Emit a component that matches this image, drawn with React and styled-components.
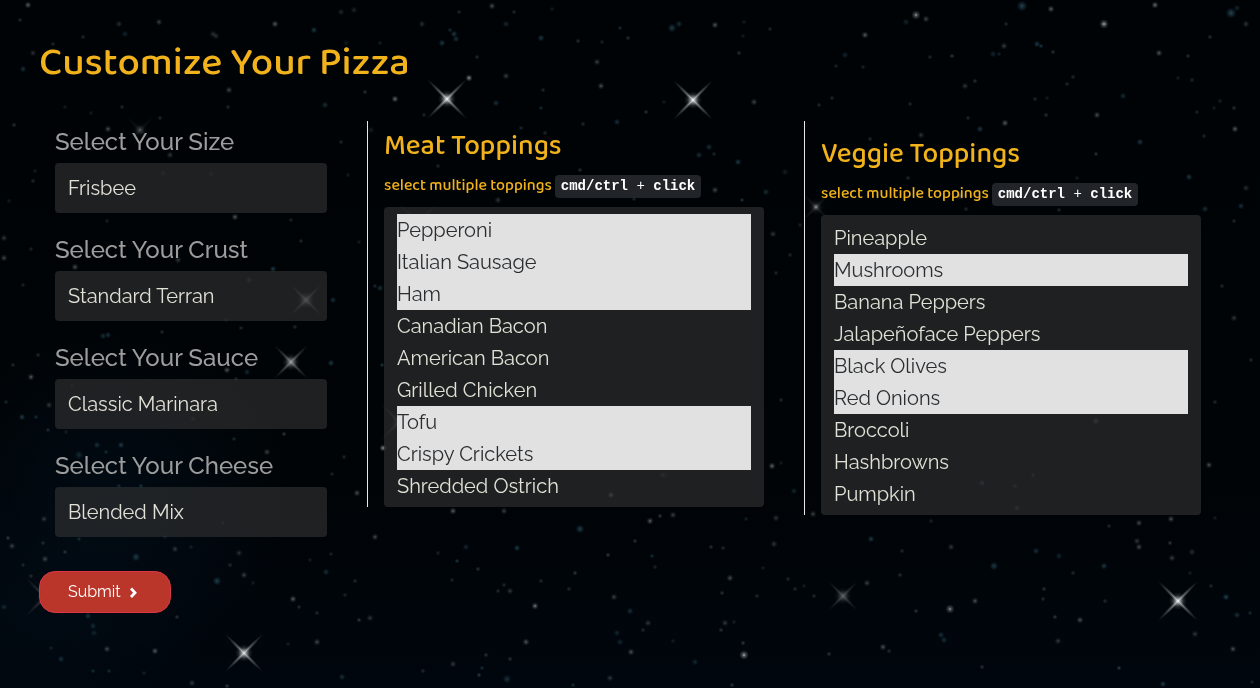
import React from "react";
import styled, { createGlobalStyle, css } from "styled-components";

const textFont = `Raleway, Lato, "Open Sans", sans-serif`;
const headingFont = `"Baloo 2", Lato, "Noto Sans", sans-serif`;

const GlobalStyle = createGlobalStyle`
  *, *::before, *::after { box-sizing: border-box; }
  body {
    margin: 0;
    background: #000408;
    color: #e1e1d8;
    font-family: ${textFont};
    font-size: 16px;
  }
`;

const Sky = styled.svg`
  position: fixed;
  inset: 0;
  width: 100%;
  height: 100%;
  z-index: -1;
`;

const Page = styled.main`
  padding: 39px 43px 40px 39px;
`;

const Title = styled.h1`
  margin: 0 0 34px;
  font: 500 40px/48px ${headingFont};
  color: #f1b21b;
`;

const Columns = styled.div`
  display: grid;
  grid-template-columns: 304px minmax(0, 1fr) minmax(0, 1fr);
  gap: 24px;
  align-items: start;
`;

const BaseColumn = styled.div`
  display: grid;
  gap: 20px;
  padding: 4px 16px 0;
`;

const Field = styled.div`
  display: grid;
  gap: 4px;
`;

const FieldLabel = styled.label`
  font-size: 24px;
  font-weight: 500;
  line-height: 34px;
  color: #9c9c9c;
`;

const control = css`
  display: block;
  width: 100%;
  margin: 0;
  border: 0;
  border-radius: 4px;
  outline: 0;
  appearance: none;
  background: rgba(54, 54, 54, 0.58);
  color: #e1e1d8;
  font: 400 20px/24px ${textFont};
`;

const Dropdown = styled.select`
  ${control}
  height: 50px;
  padding: 0 13px;
`;

const ToppingColumn = styled.section`
  padding: ${(p) => (p.$lowered ? 17 : 9)}px 16px 0;
  border-left: 1px solid #e8e8e8;
`;

const ToppingTitle = styled.h2`
  margin: 0 0 8px;
  font: 500 28px/34px ${headingFont};
  color: #f1b21b;
`;

const Hint = styled.label`
  display: flex;
  align-items: baseline;
  gap: 3px;
  margin-bottom: 8px;
  font: 500 16px/27px ${headingFont};
  color: #f1b21b;
`;

const Keys = styled.code`
  padding: 3px 6px;
  border-radius: 4px;
  background: #212529;
  color: #fff;
  font: 400 14px/17px "Liberation Mono", monospace;
  white-space: pre;
`;

const Toppings = styled.select`
  ${control}
  height: 300px;
  padding: 7px 13px 5px;
  overflow: hidden;

  option {
    min-height: 32px;
    padding: 4px 0;
    line-height: 24px;
  }

  option:checked {
    background: #e1e1e1 linear-gradient(#e1e1e1, #e1e1e1);
    color: #2b2e31;
  }
`;

const SubmitButton = styled.button`
  display: flex;
  align-items: center;
  gap: 8px;
  height: 42px;
  margin-top: 34px;
  padding: 0 32px 0 28px;
  border: 1px solid #dc3545;
  border-radius: 16px;
  background: #bb362a;
  color: #fff;
  font: 400 16px/24px ${textFont};
  cursor: pointer;
`;

/* Sky map: [x, y, radius, brightness] */
const whiteStars = [
  [28, 5, 2, 0.6], [159, 22, 2, 0.4], [275, 24, 2, 0.6], [119, 24, 2, 0.3], [213, 34, 2, 0.3], [216, 36, 2, 0.3],
  [33, 53, 2, 0.3], [229, 90, 2, 0.45], [395, 99, 2, 0.7], [108, 129, 2, 0.5], [140, 130, 3, 0.4], [170, 155, 2, 0.35],
  [341, 12, 2, 0.25], [354, 10, 2, 0.25], [235, 217, 2, 0.55], [53, 44, 1, 0.3], [83, 37, 1, 0.3],
  [122, 107, 1, 0.3], [14, 125, 1, 0.35], [65, 107, 1, 0.2], [91, 113, 1, 0.2], [160, 118, 1, 0.3], [228, 107, 1, 0.3],
  [365, 92, 1, 0.35], [341, 142, 1, 0.3], [371, 130, 2, 0.2], [33, 181, 1, 0.3], [163, 173, 2, 0.15], [211, 174, 2, 0.15],
  [291, 220, 1, 0.25], [107, 221, 1, 0.25], [9, 201, 1, 0.2], [35, 171, 1, 0.2], [348, 175, 1, 0.2], [20, 20, 1, 0.3],
  [4, 238, 2, 0.35], [4, 258, 2, 0.45], [75, 267, 2, 0.5], [31, 249, 1, 0.25], [23, 285, 1, 0.25], [178, 260, 2, 0.35],
  [249, 280, 2, 0.25], [226, 320, 1, 0.2], [162, 332, 1, 0.3], [31, 377, 2, 0.55], [227, 370, 2, 0.55], [236, 379, 1, 0.3],
  [49, 405, 2, 0.35], [38, 355, 1, 0.3], [13, 365, 1, 0.3], [193, 419, 2, 0.2], [284, 434, 1, 0.4], [48, 430, 1, 0.3],
  [66, 432, 1, 0.2], [267, 452, 2, 0.4], [383, 448, 2, 0.9], [344, 457, 1, 0.3], [241, 328, 1, 0.3], [295, 327, 1, 0.3],
  [72, 386, 1, 0.2], [301, 241, 1, 0.3], [359, 242, 1, 0.2], [357, 493, 2, 0.5], [375, 537, 2, 0.45], [332, 474, 1, 0.25],
  [12, 546, 2, 0.4], [8, 538, 1, 0.4], [44, 519, 2, 0.35], [45, 559, 2, 0.45], [43, 543, 1, 0.3], [65, 552, 1, 0.35],
  [175, 549, 2, 0.35], [239, 553, 2, 0.3], [191, 547, 1, 0.2], [244, 575, 2, 0.4], [230, 565, 1, 0.3], [253, 583, 1, 0.2],
  [293, 599, 2, 0.6], [299, 607, 1, 0.3], [317, 613, 1, 0.3], [331, 554, 1, 0.25], [310, 560, 1, 0.2], [355, 581, 1, 0.3],
  [345, 595, 1, 0.25], [359, 620, 1, 0.4], [370, 618, 2, 0.35], [317, 642, 2, 0.45], [288, 644, 1, 0.2], [155, 651, 2, 0.55],
  [107, 649, 2, 0.45], [177, 617, 1, 0.35], [31, 576, 1, 0.3], [51, 648, 1, 0.2], [192, 683, 2, 0.35], [227, 686, 1, 0.4],
  [492, 6, 2, 0.5], [422, 24, 2, 0.3], [469, 78, 2, 0.9], [506, 76, 2, 0.4], [601, 86, 2, 0.5], [597, 62, 2, 0.4],
  [715, 25, 2, 0.55], [754, 102, 2, 0.45], [739, 53, 1, 0.35], [578, 41, 1, 0.35], [628, 38, 1, 0.35], [477, 57, 1, 0.3],
  [602, 42, 1, 0.25], [770, 29, 1, 0.3], [744, 22, 1, 0.2], [514, 12, 1, 0.3], [552, 9, 1, 0.2], [459, 12, 1, 0.3],
  [583, 124, 1, 0.3], [646, 112, 1, 0.35], [664, 102, 1, 0.2], [543, 90, 1, 0.3], [545, 133, 1, 0.3], [424, 115, 1, 0.3],
  [715, 190, 2, 0.45], [580, 170, 1, 0.35], [498, 200, 2, 0.35], [438, 166, 1, 0.3], [785, 172, 2, 0.2], [816, 207, 2, 0.8],
  [832, 98, 1, 0.3], [819, 105, 1, 0.3], [836, 66, 1, 0.25], [743, 36, 1, 0.2], [800, 225, 1, 0.25],
  [916, 15, 3, 0.85], [926, 19, 2, 0.45], [865, 35, 2, 0.6], [1004, 46, 2, 0.4], [1051, 9, 2, 0.6], [1104, 24, 3, 1],
  [1155, 5, 2, 0.7], [1246, 24, 2, 0.35], [1159, 53, 2, 0.55], [1188, 56, 1, 0.35], [952, 56, 1, 0.4], [930, 57, 1, 0.3],
  [1053, 52, 1, 0.35], [965, 86, 2, 0.35], [975, 81, 1, 0.35], [1005, 123, 2, 0.6], [1097, 115, 2, 0.5], [1235, 129, 2, 0.6],
  [1035, 99, 1, 0.3], [1047, 98, 1, 0.2], [1046, 115, 1, 0.35], [1067, 84, 1, 0.3], [1073, 77, 1, 0.3], [910, 104, 1, 0.3],
  [968, 118, 1, 0.3], [921, 135, 2, 0.35], [870, 139, 1, 0.3], [863, 67, 1, 0.25], [1192, 80, 1, 0.3], [1178, 78, 1, 0.2],
  [1220, 101, 1, 0.25], [1234, 108, 1, 0.35], [1197, 112, 1, 0.25], [1214, 108, 1, 0.2], [1096, 154, 1, 0.35], [1246, 188, 2, 0.3],
  [1234, 221, 1, 0.3], [1059, 210, 1, 0.3], [960, 196, 3, 0.4], [908, 178, 1, 0.3], [1077, 178, 1, 0.2], [929, 157, 2, 0.25],
  [966, 209, 1, 0.3], [1204, 136, 1, 0.3], [1210, 37, 1, 0.35], [1006, 24, 1, 0.3],
  [772, 466, 2, 0.65], [781, 463, 1, 0.2], [453, 511, 2, 0.6], [504, 511, 2, 0.4], [611, 495, 2, 0.5], [663, 475, 2, 0.2],
  [650, 521, 2, 0.6], [660, 516, 1, 0.4], [673, 515, 2, 0.4], [776, 518, 2, 0.35], [813, 514, 2, 0.4], [774, 544, 2, 0.35],
  [635, 541, 1, 0.35], [608, 555, 1, 0.4], [478, 569, 1, 0.35], [438, 553, 1, 0.25], [452, 580, 1, 0.25], [575, 573, 1, 0.4],
  [498, 591, 1, 0.3], [510, 591, 2, 0.35], [504, 585, 1, 0.3], [541, 581, 1, 0.3], [614, 597, 2, 0.4], [535, 606, 2, 0.75],
  [526, 642, 2, 0.55], [569, 589, 1, 0.3], [655, 567, 1, 0.25], [730, 578, 2, 0.5], [722, 593, 1, 0.35], [757, 596, 1, 0.3],
  [788, 579, 1, 0.3], [795, 589, 1, 0.3], [804, 586, 1, 0.2], [814, 596, 1, 0.3], [763, 568, 1, 0.2], [725, 623, 2, 0.35],
  [721, 630, 1, 0.35], [734, 622, 1, 0.2], [744, 655, 3, 1], [743, 643, 1, 0.4], [631, 652, 2, 0.5], [648, 623, 2, 0.35],
  [643, 630, 1, 0.3], [673, 641, 1, 0.2], [453, 664, 2, 0.35], [486, 655, 1, 0.35], [510, 659, 1, 0.35], [479, 675, 1, 0.4],
  [610, 678, 2, 0.35], [829, 654, 1, 0.35], [732, 685, 1, 0.35], [423, 671, 1, 0.3], [711, 547, 1, 0.35], [723, 548, 1, 0.3],
  [1209, 465, 2, 0.5], [951, 547, 2, 0.35], [902, 551, 1, 0.3], [900, 575, 1, 0.35], [867, 583, 2, 0.4], [950, 609, 3, 0.8],
  [975, 601, 2, 0.5], [916, 611, 1, 0.35], [883, 647, 2, 0.5], [889, 651, 1, 0.3], [1055, 617, 1, 0.4], [1080, 620, 2, 0.5],
  [1044, 589, 1, 0.35], [1043, 599, 1, 0.3], [1105, 601, 1, 0.3], [1073, 573, 1, 0.3], [1058, 641, 2, 0.35], [1195, 634, 2, 0.35],
  [1233, 649, 2, 0.5], [1119, 668, 1, 0.4], [982, 667, 1, 0.35], [1139, 523, 2, 0.45], [1137, 541, 2, 0.35], [1139, 547, 2, 0.45],
  [1171, 519, 2, 0.5], [1170, 543, 1, 0.4], [1172, 558, 2, 0.4], [1192, 552, 2, 0.3], [1109, 526, 1, 0.3], [1215, 518, 1, 0.2],
  [1190, 573, 1, 0.2], [1211, 586, 1, 0.3], [931, 521, 1, 0.25], [1017, 508, 2, 0.25], [1033, 475, 1, 0.25], [1015, 486, 1, 0.25],
  [1251, 360, 1, 0.3], [1222, 286, 1, 0.3], [1234, 318, 2, 0.35], [1215, 402, 1, 0.3], [790, 255, 1, 0.3], [776, 273, 1, 0.3],
  [773, 234, 2, 0.35], [781, 400, 1, 0.3], [1096, 421, 2, 0.4],
];

const tealStars = [
  [314, 30, 2, 0.6], [23, 69, 2, 0.5], [325, 105, 2, 0.5], [125, 34, 2, 0.4], [346, 43, 2, 0.25], [380, 43, 1, 0.4],
  [224, 143, 2, 0.25], [273, 269, 2, 0.6], [333, 300, 2, 0.5], [103, 336, 2, 0.5], [108, 335, 2, 0.5], [331, 363, 2, 0.6],
  [247, 372, 2, 0.4], [22, 417, 2, 0.6], [36, 417, 1, 0.5], [97, 445, 2, 0.5], [121, 445, 2, 0.6], [79, 455, 3, 0.4],
  [106, 452, 1, 0.5], [234, 439, 1, 0.5], [6, 402, 1, 0.5], [380, 288, 2, 0.5], [375, 286, 1, 0.5], [382, 365, 1, 0.6],
  [141, 486, 1, 0.6], [119, 486, 1, 0.5], [79, 539, 1, 0.5], [136, 557, 3, 0.6], [217, 581, 3, 0.65], [326, 572, 2, 0.5],
  [23, 565, 1, 0.5], [88, 616, 2, 0.5], [93, 626, 2, 0.45], [94, 633, 2, 0.35], [61, 659, 2, 0.5], [93, 671, 1, 0.5],
  [109, 671, 1, 0.5], [342, 677, 2, 0.5], [144, 673, 1, 0.4], [4, 607, 2, 0.4], [223, 523, 1, 0.4], [165, 537, 1, 0.4],
  [450, 30, 1, 0.5], [454, 34, 2, 0.6], [456, 39, 2, 0.5], [442, 43, 2, 0.6], [506, 24, 2, 0.45], [541, 38, 2, 0.6],
  [620, 28, 1, 0.5], [672, 28, 3, 0.6], [679, 24, 2, 0.5], [496, 103, 2, 0.5], [541, 108, 1, 0.5], [617, 122, 2, 0.5],
  [521, 128, 1, 0.5], [709, 147, 2, 0.5], [699, 155, 2, 0.5], [714, 154, 1, 0.5], [738, 162, 2, 0.6], [766, 192, 2, 0.5],
  [742, 200, 1, 0.6], [634, 199, 1, 0.5], [1022, 6, 4, 0.7], [1231, 13, 4, 0.7], [1237, 8, 2, 0.4], [1037, 44, 2, 0.6],
  [1041, 46, 1, 0.6], [993, 54, 2, 0.4], [999, 54, 1, 0.4], [980, 129, 2, 0.6], [1140, 142, 2, 0.6], [906, 22, 2, 0.4],
  [1189, 177, 2, 0.6], [1241, 206, 2, 0.5], [1205, 209, 2, 0.5], [845, 55, 2, 0.4], [1123, 96, 2, 0.45],
  [580, 529, 3, 0.65], [517, 548, 2, 0.6], [466, 547, 2, 0.4], [457, 561, 1, 0.6], [652, 556, 1, 0.5], [630, 611, 2, 0.5],
  [617, 633, 2, 0.4], [620, 642, 2, 0.4], [507, 679, 3, 0.5], [482, 668, 1, 0.5], [695, 662, 2, 0.4], [794, 491, 2, 0.4],
  [746, 519, 1, 0.4], [573, 685, 1, 0.5], [871, 539, 2, 0.6], [994, 566, 3, 0.6], [1036, 551, 2, 0.5], [1059, 556, 2, 0.4],
  [1104, 566, 2, 0.6], [941, 635, 2, 0.5], [944, 640, 2, 0.5], [1226, 597, 2, 0.7], [1237, 615, 2, 0.5], [1250, 613, 1, 0.5],
  [1163, 684, 2, 0.6], [982, 483, 2, 0.5], [1252, 682, 1, 0.5],
];

/* Stars with diagonal diffraction spikes: [x, y, arm, brightness] */
const flares = [
  [447, 99, 19, 1], [693, 100, 19, 1], [1178, 601, 19, 1], [244, 653, 18, 0.95], [291, 362, 16, 0.65],
  [306, 300, 15, 0.5], [45, 597, 19, 0.4], [843, 596, 14, 0.4], [816, 207, 13, 0.2], [399, 422, 18, 0.3],
  [140, 130, 14, 0.12], [418, 223, 20, 0.2],
];

function NightSky() {
  return (
    <Sky viewBox="0 0 1260 688" preserveAspectRatio="xMidYMid slice" aria-hidden="true">
      <defs>
        <radialGradient id="white">
          <stop offset="0" stopColor="#fff" />
          <stop offset="0.3" stopColor="#c4c9cb" stopOpacity="0.55" />
          <stop offset="1" stopColor="#889094" stopOpacity="0" />
        </radialGradient>
        <radialGradient id="teal">
          <stop offset="0" stopColor="#36606f" />
          <stop offset="0.5" stopColor="#24495a" stopOpacity="0.6" />
          <stop offset="1" stopColor="#1b3c4a" stopOpacity="0" />
        </radialGradient>
        <radialGradient id="nebula">
          <stop offset="0" stopColor="#031220" stopOpacity="0.5" />
          <stop offset="1" stopColor="#031220" stopOpacity="0" />
        </radialGradient>
        <linearGradient id="space" x1="0" y1="0" x2="0" y2="1">
          <stop offset="0" stopColor="#000306" />
          <stop offset="0.7" stopColor="#000407" />
          <stop offset="1" stopColor="#00060d" />
        </linearGradient>
      </defs>
      <rect width="1260" height="688" fill="url(#space)" />
      <ellipse cx="110" cy="500" rx="180" ry="170" fill="url(#nebula)" />
      <ellipse cx="30" cy="620" rx="180" ry="120" fill="url(#nebula)" opacity="0.6" />
      {tealStars.map(([x, y, r, o]) => (
        <circle key={`${x}-${y}`} cx={x} cy={y} r={r + 1.5} opacity={o} fill="url(#teal)" />
      ))}
      {whiteStars.map(([x, y, r, o]) => (
        <circle key={`${x}-${y}`} cx={x} cy={y} r={r + 1.8} opacity={o * 0.75} fill="url(#white)" />
      ))}
      {flares.map(([x, y, a, o]) => (
        <g key={`${x}-${y}`} transform={`translate(${x} ${y}) rotate(45)`} opacity={o} fill="url(#white)">
          <ellipse rx={a * 1.5} ry="2.2" opacity="0.85" />
          <ellipse rx="2.2" ry={a * 1.5} opacity="0.85" />
          <circle r="9" opacity="0.6" />
          <circle r="6" />
        </g>
      ))}
    </Sky>
  );
}

const bases = [
  { id: "size", label: "Select Your Size", value: "Frisbee" },
  { id: "crust", label: "Select Your Crust", value: "Standard Terran" },
  { id: "sauce", label: "Select Your Sauce", value: "Classic Marinara" },
  { id: "cheese", label: "Select Your Cheese", value: "Blended Mix" },
];

const meats = [
  "Pepperoni", "Italian Sausage", "Ham", "Canadian Bacon", "American Bacon",
  "Grilled Chicken", "Tofu", "Crispy Crickets", "Shredded Ostrich",
];

const veggies = [
  "Pineapple", "Mushrooms", "Banana Peppers", "Jalapeñoface Peppers", "Black Olives",
  "Red Onions", "Broccoli", "Hashbrowns", "Pumpkin",
];

function ToppingPicker({ id, title, options, chosen, lowered }) {
  return (
    <ToppingColumn $lowered={lowered}>
      <ToppingTitle>{title}</ToppingTitle>
      <Hint htmlFor={id}>
        select multiple toppings
        <Keys><b>cmd/ctrl</b> + <b>click</b></Keys>
      </Hint>
      <Toppings id={id} multiple size={9} defaultValue={chosen}>
        {options.map((name) => <option key={name}>{name}</option>)}
      </Toppings>
    </ToppingColumn>
  );
}

export default function App() {
  return (
    <>
      <GlobalStyle />
      <NightSky />
      <Page>
        <Title>Customize Your Pizza</Title>
        <form onSubmit={(e) => e.preventDefault()}>
          <Columns>
            <BaseColumn>
              {bases.map(({ id, label, value }) => (
                <Field key={id}>
                  <FieldLabel htmlFor={id}>{label}</FieldLabel>
                  <Dropdown id={id} defaultValue={value}>
                    <option>{value}</option>
                  </Dropdown>
                </Field>
              ))}
            </BaseColumn>
            <ToppingPicker
              id="meat"
              title="Meat Toppings"
              options={meats}
              chosen={["Pepperoni", "Italian Sausage", "Ham", "Tofu", "Crispy Crickets"]}
            />
            <ToppingPicker
              id="veggie"
              title="Veggie Toppings"
              options={veggies}
              chosen={["Mushrooms", "Black Olives", "Red Onions"]}
              lowered
            />
          </Columns>
          <SubmitButton type="submit">
            Submit
            <svg width="9" height="12" viewBox="0 0 9 12" aria-hidden="true">
              <path d="M2 2.5 6 6.7 2 11" fill="none" stroke="#fff" strokeWidth="2.8" />
            </svg>
          </SubmitButton>
        </form>
      </Page>
    </>
  );
}
